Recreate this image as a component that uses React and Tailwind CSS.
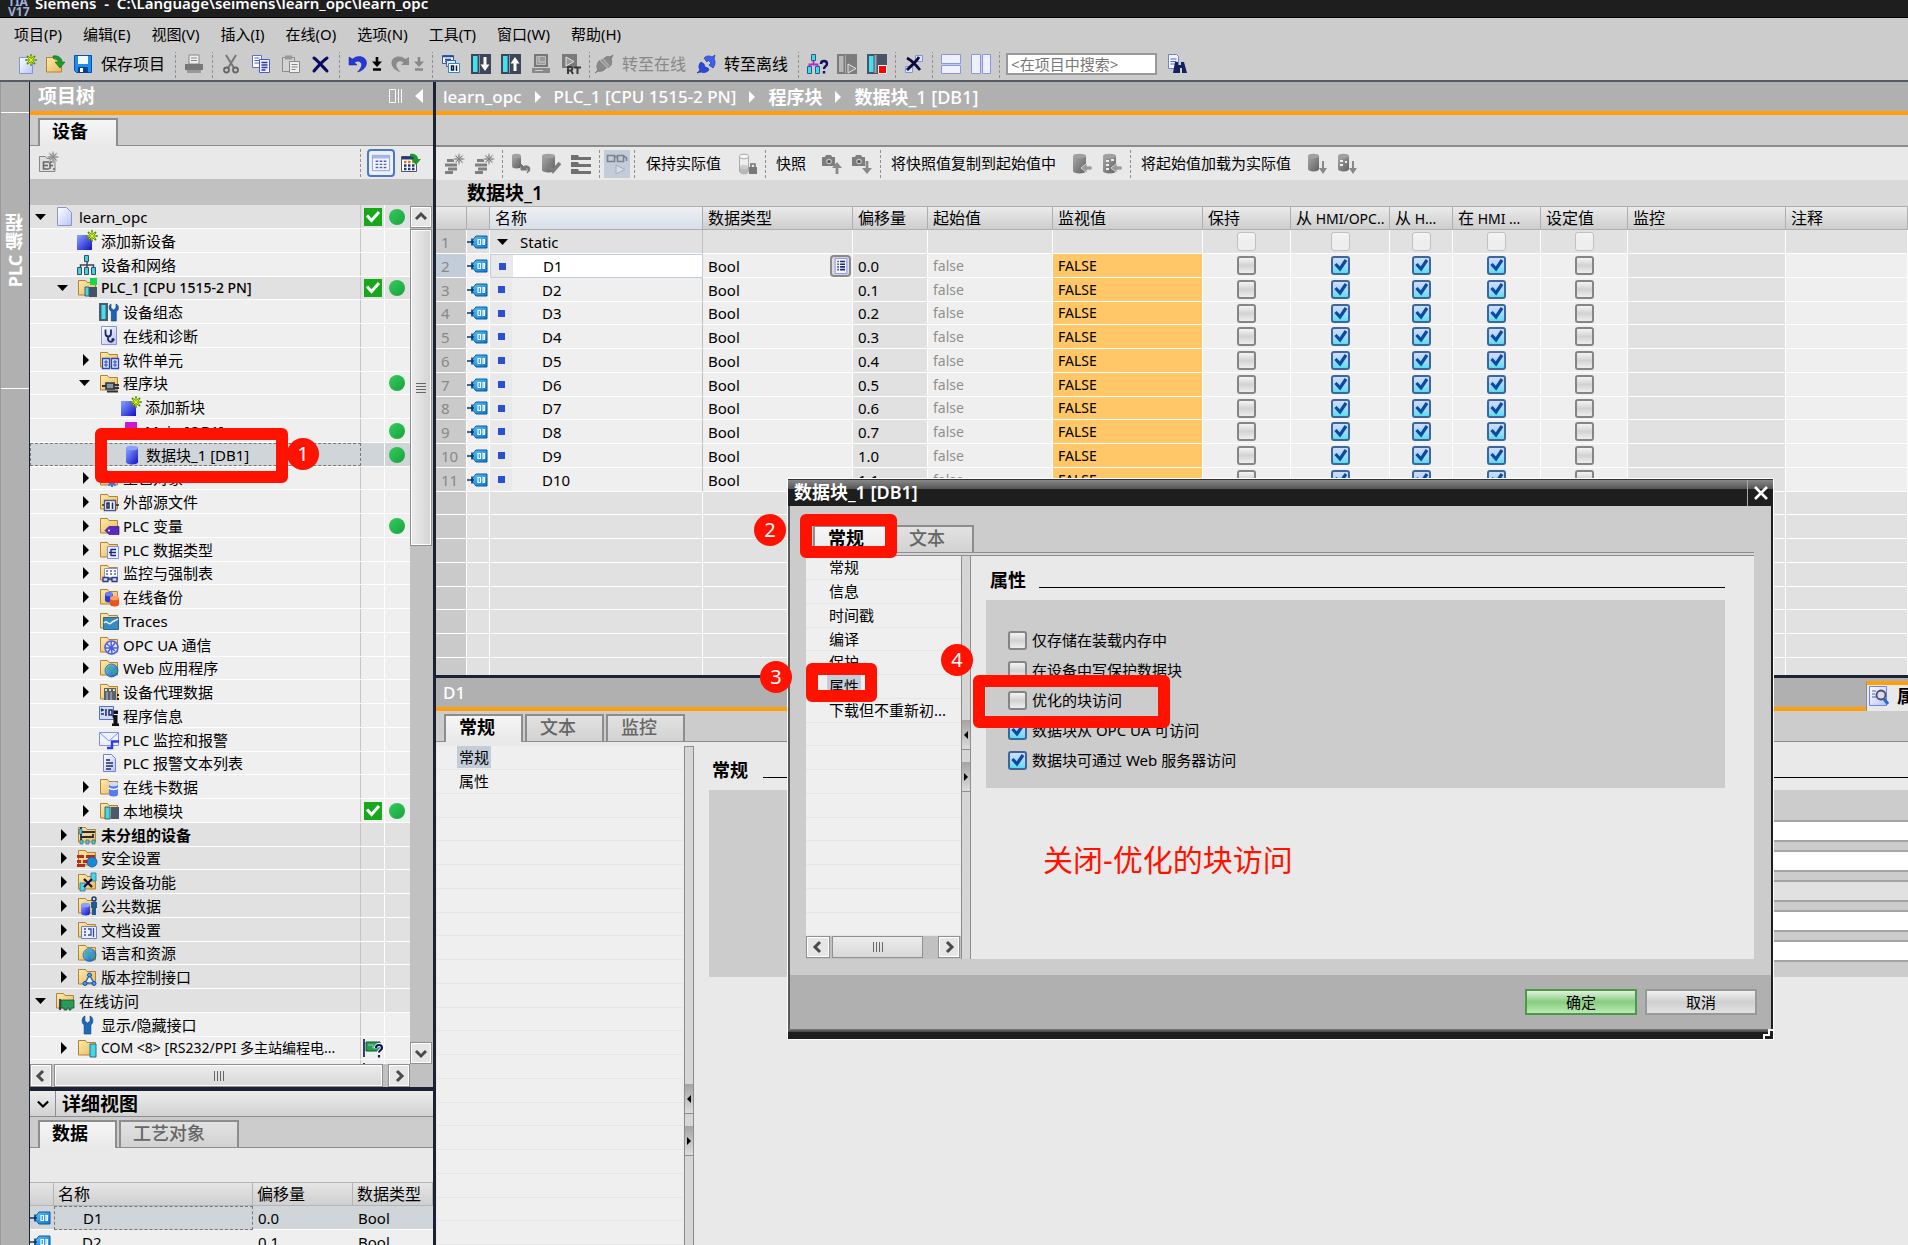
import React from "react";

/* ---------- shared gradients ---------- */
function Gradients() {
  const stops = {
    gFolder: ["#fdeaae", "#e9b95c"],
    gBlue: ["#8aa4ff", "#1010c8"],
    gGray: ["#a8a8a8", "#5f5f5f"],
    gTag: ["#5cc4ff", "#0a78cf"],
    gGreen: ["#45d06a", "#119a38"],
    gPage: ["#ffffff", "#b9c4f5"],
    gGlobe: ["#7fd6ff", "#0a55b5"],
  };
  return (
    <svg width="0" height="0" className="absolute" aria-hidden="true">
      <defs>
        {Object.entries(stops).map(([id, [a, b]]) => (
          <linearGradient key={id} id={id} x1="0" y1="0" x2="1" y2="1">
            <stop offset="0" stopColor={a} />
            <stop offset="1" stopColor={b} />
          </linearGradient>
        ))}
      </defs>
    </svg>
  );
}

const folder = <path d="M1.5 17V2.500h7l1.500 2h8.500V17z" fill="url(#gFolder)" stroke="#b08432" />;
const spark = (x, y, c = "#f2f200", d = "#4a8a20") => (
  <g transform={`translate(${x} ${y})`} strokeLinecap="round">
    <path d="M0-5V5M-5 0H5M-3.500-3.500L3.500 3.500M3.500-3.500L-3.500 3.500" stroke={d} strokeWidth="1.800" />
    <path d="M0-4V4M-4 0H4M-2.500-2.500L2.500 2.500M2.500-2.500L-2.500 2.500" stroke={c} strokeWidth="1" />
  </g>
);
const cyl = (x, y, w, h, fill, top) => (
  <g>
    <path d={`M${x} ${y + 2}v${h - 4}a${w / 2} 2.500 0 0 0 ${w} 0v${4 - h}z`} fill={fill} />
    <ellipse cx={x + w / 2} cy={y + 2} rx={w / 2} ry="2.300" fill={top} />
  </g>
);
const pageShape = <path d="M4.500 1.500h8l4 4v13h-12z" fill="url(#gPage)" stroke="#6f83cf" />;
const globe = (x, y, r) => (
  <g>
    <circle cx={x} cy={y} r={r} fill="url(#gGlobe)" stroke="#0a4a9a" strokeWidth=".6" />
    <path d={`M${x - 4} ${y - 4}l4-1 1 3-3 3-3-2zM${x + 1} ${y}l4-2 1 3-3 4-2-2z`} fill="#3fae7a" opacity=".7" />
  </g>
);
const camera = (
  <g>
    <path d="M0 3h3l1-2h5l1 2h3v9H0z" fill="#7d7d7d" />
    <circle cx="7" cy="7.500" r="2.800" fill="#c4c4c4" />
    <circle cx="7" cy="7.500" r="1.600" fill="#505050" />
  </g>
);

const ICONS = {
  newProject: <>{<path d="M2.500 3.500h9l4 4v12h-13z" fill="url(#gPage)" stroke="#7f93df" />}{spark(14, 6)}</>,
  openProject: <><path d="M1.500 18V3.500h6l2 2h7V18z" fill="url(#gFolder)" stroke="#b08432" /><path d="M8 2c5-1 9 2 9 6h3l-5 6-5-6h3c0-2-2-4-5-4z" fill="#1d9a2d" stroke="#0b6a18" strokeWidth=".6" /></>,
  save: <><path d="M1.500 1.500h17v17h-15l-2-2z" fill="#1b8fe8" stroke="#0a4fae" /><path d="M5 2h10v8H5z" fill="#f4f8ff" /><path d="M5 13h10v6H5z" fill="#0a3f8e" /><path d="M7 14h3v4H7z" fill="#fff" /></>,
  print: <><path d="M5 1h10v9H5z" fill="#eee" stroke="#888" /><path d="M7 4h6M7 6.500h6" stroke="#888" /><path d="M1 10h18v6H1z" fill="#777" /><path d="M3 16h14v3H3z" fill="#999" /></>,
  cut: <><path d="M5 1l8 13M15 1L7 14" stroke="#777" strokeWidth="2" /><circle cx="5.500" cy="16" r="2.500" fill="none" stroke="#666" strokeWidth="1.800" /><circle cx="14.500" cy="16" r="2.500" fill="none" stroke="#666" strokeWidth="1.800" /></>,
  copy: <><path d="M1.500 1.500h9v12h-9z" fill="#fff" stroke="#6070c8" /><path d="M3.500 4h5M3.500 6.500h5M3.500 9h5" stroke="#5060b8" /><path d="M8.500 5.500h10v13h-10z" fill="#eef1ff" stroke="#4a5cc8" /><path d="M10.500 8.500h6M10.500 11h6M10.500 13.500h6M10.500 16h4" stroke="#2a3aa8" strokeWidth="1.300" /></>,
  paste: <><path d="M1.500 3.500h12v14h-12z" fill="#d2d2d2" stroke="#8a8a8a" /><path d="M4 1.500h7v4H4z" fill="#999" /><path d="M8.500 7.500h10v11h-10z" fill="#eee" stroke="#888" /><path d="M10.500 10.500h6M10.500 13h6M10.500 15.500h4" stroke="#888" /></>,
  del: <path d="M3 4c4 3 9 9 13 13M16 4C12 7 8 11 3 17" stroke="#0a0a60" strokeWidth="3" fill="none" strokeLinecap="round" />,
  undo: <path d="M1 3v8h8L6.500 8.500c4-3 8 0 7 3.500-.5 2-2 4-4 6 5-1 9-5 9-9 0-6-8-9-14-4z" fill="#2438d8" stroke="#1524a0" strokeWidth=".5" />,
  redo: <path d="M19 3v8h-8l2.500-2.500c-4-3-8 0-7 3.500.5 2 2 4 4 6-5-1-9-5-9-9 0-6 8-9 14-4z" fill="#8a8a8a" />,
  compile: <><path d="M1.500 1.500h11v8h-11z" fill="#eef2ff" stroke="#3a5aa8" /><path d="M1.500 2.500h11M4 5.500h6M4 7.500h6" stroke="#2a4a98" strokeWidth="1.500" /><path d="M5.500 6.500h9v6h-9z" fill="#dfe8f8" stroke="#3a5aa8" /><path d="M7.500 9.500h11v9h-11z" fill="#fff" stroke="#2a8ac8" /><path d="M10.500 12h2v4h-2zM15.500 11.500V17" fill="none" stroke="#0a1a50" strokeWidth="1.500" /></>,
  download: <><path d="M0 0h20v20H0z" fill="#3c4658" /><path d="M2 2h4.500v16H2z" fill="#43e0ee" /><path d="M8.500 1v18" stroke="#8a94a8" /><path d="M14 3v9" stroke="#fff" strokeWidth="3" /><path d="M9.500 10.500h9l-4.500 6.500z" fill="#fff" /></>,
  upload: <><path d="M0 0h20v20H0z" fill="#3c4658" /><path d="M2 2h4.500v16H2z" fill="#43e0ee" /><path d="M8.500 1v18" stroke="#8a94a8" /><path d="M14 17V8" stroke="#fff" strokeWidth="3" /><path d="M9.500 9.500h9L14 3z" fill="#fff" /></>,
  pc: <><path d="M3 0h14v13H3z" fill="#777" /><path d="M5.500 2.500h9v8h-9z" fill="#9a9a9a" stroke="#bbb" /><path d="M8 3v5h6" stroke="#ccc" fill="none" /><path d="M1 14h18v5H1z" fill="#888" /><path d="M4 16.500h8" stroke="#ccc" /></>,
  rt: <><path d="M1 0h15v14H1z" fill="#7a7a7a" /><path d="M5 3l8 4.500-8 4.500z" fill="#999" stroke="#e4e4e4" /><path d="M7 20v-7h2.500a1.800 1.800 0 0 1 0 3.600H7M10 16.600l2 3.400M13 13.500h7M16.500 13.500V20" fill="none" stroke="#3a3a3a" strokeWidth="2" /></>,
  plugGray: <><path d="M1 19l3-3c-2-3-1-6 1-9l3-1 4-3c2-1 4 0 4 0l3-2-2 4c1 3 1 6-2 8l-3 1-2 2c-3 2-5 1-6 1z" fill="#8a8a8a" stroke="#707070" strokeWidth=".8" /><path d="M6 6l8 8M9 5l6 7" stroke="#b4b4b4" strokeWidth="1.200" /></>,
  plugBlue: <><path d="M1 19l3-3c-2-3-1-6 1-8l3 2 1 3 3 1 1 2c-3 3-6 3-8 2z" fill="#2a48dc" stroke="#1524a0" strokeWidth=".6" /><path d="M19 1l-3 2c-3-2-6-1-8 1l3 4 1-2 3 3-2 2 4 3c2-3 3-6 1-9z" fill="#3c62f0" stroke="#1524a0" strokeWidth=".6" /></>,
  netHelp: <><path d="M4.500.500h4v6h-4z" fill="#45d8e8" stroke="#2a5a8a" /><path d="M6.500 7v3M2.500 14v-3.500h8V14" stroke="#b030c8" strokeWidth="2" fill="none" /><path d="M.500 12.500h4v7h-4zM8.500 12.500h4v7h-4z" fill="#45d8e8" stroke="#2a5a8a" /><path d="M14 10c0-4 6-4 6 0 0 2-3 2.500-3 5M17 17v2.500" stroke="#101060" strokeWidth="2.400" fill="none" /></>,
  simGray: <><path d="M0 0h20v20H0z" fill="#7c7c7c" /><path d="M2 2h4.500v16H2z" fill="#b8b8b8" /><path d="M8.500 1v18" stroke="#aaa" /><path d="M11 10l8 4.500-8 4.500z" fill="#8a8a8a" stroke="#e4e4e4" /></>,
  simStop: <><path d="M0 0h20v20H0z" fill="#4a5468" /><path d="M2 2h4.500v16H2z" fill="#43e0ee" /><path d="M8.500 1v18" stroke="#9aa4b8" strokeWidth="2" /><path d="M11.500 11.500h8v8h-8z" fill="#f00" stroke="#fff" /></>,
  cross: <><path d="M11.500 1.500h7v6h-7zM1.500 12.500h7v6h-7z" fill="#dfe6fb" stroke="#7f93df" /><path d="M3 4c4 2 9 7 13 12M15 3C12 8 8 11 3 16" stroke="#0a0a40" strokeWidth="2.800" fill="none" /></>,
  splitH: <><path d="M.500.500h19v9H.500zM.500 11.500h19v8H.500z" fill="#eef0ff" stroke="#8a96e0" /></>,
  splitV: <><path d="M.500.500h9v19h-9zM11.500.500h8v19h-8z" fill="#eef0ff" stroke="#8a96e0" /></>,
  find: <><path d="M1.500.500h8l2 2v12h-10z" fill="#f4f6ff" stroke="#6f83cf" /><path d="M3.500 5h6M3.500 7.500h6M3.500 10h4" stroke="#5060b8" /><path d="M8 8h3v3h3V8h3l3 11h-5v-5h-2v5H6z" fill="#16205e" /></>,
  addGray: <><path d="M1.500 3.500h6l1.500 2h8v13h-15.500z" fill="#ddd" stroke="#888" /><path d="M5 9h6M5 12.500h5M5 16h6M5.500 9v7M12 9v7M12 9h4M12 12.500h3M15 16h2" stroke="#666" strokeWidth="1.600" />{spark(15, 4, "#888", "#bbb")}</>,
  gridView: <><path d="M.500 1.500h19v17H.500z" fill="#f4f6ff" stroke="#8a98e0" /><path d="M1 3.500h18" stroke="#a9b6f0" strokeWidth="3" /><path d="M4 8h3M8.500 8h3M13 8h3M4 11.500h3M8.500 11.500h3M13 11.500h3M4 15h3M8.500 15h3M13 15h3" stroke="#5060b8" strokeWidth="1.600" /></>,
  gridGo: <><path d="M.500 3.500h15v15H.500z" fill="#fff" stroke="#556" /><path d="M1 5h14" stroke="#223a78" strokeWidth="3" /><path d="M3 9h2.500M7 9h2.500M11 9h2.500" stroke="#e07a20" strokeWidth="2.400" /><path d="M3 12.500h2.500M7 12.500h2.500M11 12.500h2.500M3 16h2.500M7 16h2.500M11 16h2.500" stroke="#223a78" strokeWidth="2.400" /><path d="M9 1c5-1 8 2 8 5h3l-5 6-5-6h3c0-2-2-3-4-3z" fill="#1d9a2d" /></>,
  insRow: <><path d="M3 5h7v3H3zM1 9.500h12v3H1zM4 13.500h9v3H4zM1 17h8v3H1z" fill="#808080" />{spark(15, 5, "#808080", "#c4c4c4")}</>,
  cylUndo: <>{cyl(1, 0, 9, 14, "url(#gGray)", "#a0a0a0")}<path d="M10 10v6h6l-2-2c3-.5 4 2 2 5 4-2 4-8-2-7l-1.500.5z" fill="#777" stroke="#777" /></>,
  cylCheck: <>{cyl(1, 0, 13, 18, "url(#gGray)", "#a0a0a0")}<path d="M8 12l4 5 7-8" stroke="#7d7d7d" strokeWidth="3.500" fill="none" /></>,
  bars: <path d="M0 1h7l1 2h12v3H0zM0 8h7l1 2h12v3H0zM0 15h7l1 2h12v3H0z" fill="#707070" />,
  glasses: <><path d="M.500 1.500h7v6h-7zM10.500 1.500h6v6h-6zM7.500 3h3M16.500 2l3 2v3" fill="none" stroke="#7a828c" strokeWidth="1.600" /><path d="M9 11l9 4.500L9 20z" fill="#d8dde2" stroke="#a4aeb8" /></>,
  cylLock: <><path d="M2.500 3v14c0 3 9 3 9 0V3" fill="#eee" stroke="#aaa" />{cyl(3, 11, 8, 9, "#b8b8b8", "#ccc")}<ellipse cx="7" cy="2.500" rx="4.500" ry="2.300" fill="#f4f4f4" stroke="#aaa" /><path d="M12 13h8v7h-8z" fill="#777" /><path d="M14 13v-3h4v3" fill="none" stroke="#777" strokeWidth="1.600" /></>,
  camUp: <>{camera}<path d="M15 20v-8" stroke="#8a8a8a" strokeWidth="2.800" /><path d="M10 14h10l-5-6z" fill="#8a8a8a" /></>,
  camDown: <>{camera}<path d="M15 7v8" stroke="#8a8a8a" strokeWidth="2.800" /><path d="M10 14h10l-5 6z" fill="#8a8a8a" /></>,
  cylLeft: <>{cyl(1, 0, 13, 19, "url(#gGray)", "#a0a0a0")}<path d="M9 14l6-5v3h5v4h-5v3z" fill="#9a9a9a" stroke="#e4e4e4" strokeWidth=".8" /></>,
  cylLeftDots: <>{cyl(1, 0, 13, 19, "url(#gGray)", "#a0a0a0")}<path d="M4 7h3M4 11h3M4 15h3M9 6h3" stroke="#eee" strokeWidth="2" /><path d="M9 14l6-5v3h5v4h-5v3z" fill="#9a9a9a" stroke="#e4e4e4" strokeWidth=".8" /></>,
  cylDown: <>{cyl(1, 0, 11, 17, "url(#gGray)", "#a0a0a0")}<path d="M16 7v9" stroke="#888" strokeWidth="2" /><path d="M12 14h8l-4 6z" fill="#888" /></>,
  cylDownDots: <>{cyl(1, 0, 11, 17, "url(#gGray)", "#a0a0a0")}<path d="M3 7h3M3 11h3M8 8h2" stroke="#eee" strokeWidth="2" /><path d="M16 7v9" stroke="#888" strokeWidth="2" /><path d="M12 14h8l-4 6z" fill="#888" /></>,
  project: <path d="M2.500.500h9l5 5v13h-14z" fill="url(#gPage)" stroke="#8a96d0" />,
  add: <><path d="M0 4h15v15H0z" fill="url(#gBlue)" />{spark(15, 5)}</>,
  network: <><path d="M10 7v3M3.500 14v-4h13v4M10 10v4" stroke="#445" strokeWidth="1.500" fill="none" /><path d="M7.500.500h4v6h-4zM.500 12.500h4v7h-4zM7.500 12.500h4v7h-4zM14.500 12.500h4v7h-4z" fill="#43d0e0" stroke="#33506a" /></>,
  plc: <>{folder}<path d="M8 9h4v9H8z" fill="#43d8e8" stroke="#345" strokeWidth=".8" /><path d="M12 9h8v10h-8z" fill="#445064" /><path d="M13 0h7v7h-7z" fill="#12d84a" /></>,
  devConfig: <><path d="M0 1h9v18H0z" fill="#4a5c70" /><path d="M2.500 3h4v14h-4z" fill="#43e0ee" /><path d="M12 2v4l2.500 2L17 6V2c3 1 3.500 6 .3 7.500V19h-5V9.500C9.500 8 9.500 3 12 2z" fill="#1d62b8" stroke="#0c3a78" strokeWidth=".6" /></>,
  diag: <><path d="M2.500.500h15v18h-15z" fill="url(#gPage)" stroke="#8a96d0" /><path d="M6.500 3.500v4c0 4 5.500 4 5.500 0v-4M9 11v2c0 3 4 3.500 5 1.500" fill="none" stroke="#1a2a6a" strokeWidth="1.800" /><circle cx="14" cy="13.500" r="1.600" fill="#1a2a6a" /></>,
  units: <>{folder}<path d="M3.500 8.500h7v10h-7zM12.500 8.500h7v10h-7z" fill="#dfe8ff" stroke="#2a48b8" strokeWidth="1.300" /><path d="M5 12h4M5 15h4M14 12h4M14 15h4M7 10v7M16 10v7" stroke="#2a48b8" /></>,
  blocks: <>{folder}<path d="M7 10h8v6H7z" fill="#8a94a4" stroke="#2a3442" strokeWidth="1.600" /><path d="M3 13h4M15 12h5M15 15h5M8 18.500h11" stroke="#2a3442" strokeWidth="2" /></>,
  ob: <path d="M4 1h12v17H4z" fill="#c81ad0" />,
  db: cyl(4, 1, 12, 18, "url(#gBlue)", "#8aa0ff"),
  tech: <>{folder}<path d="M13 9v10M8 14h10M9.500 10.500l7 7M16.500 10.500l-7 7" stroke="#2a7ae0" strokeWidth="2" /><circle cx="13" cy="14" r="3" fill="#2a7ae0" /></>,
  extSrc: <>{folder}<path d="M5.500 8.500h11v10h-11z" fill="#fff" stroke="#4a5a80" strokeWidth="1.400" /><path d="M8 11h2v5H8zM13.500 10.500V17M3 13h2M17 13h3" fill="none" stroke="#1a2a5a" strokeWidth="1.600" /></>,
  tags: <>{folder}<path d="M6 14.500l4-4h10v8H10z" fill="#5a2ac0" stroke="#3a1480" strokeWidth=".7" /><circle cx="10" cy="14.500" r="1" fill="#fff" /></>,
  types: <>{folder}<path d="M8.500 6.500h11v12h-11z" fill="#e8edff" stroke="#7f93df" /><path d="M12 9v7M12 9.500h5M12 12.500h5M12 15.500h5M10 12.500h2" stroke="#1a2a7a" strokeWidth="1.400" /></>,
  watch: <>{folder}<path d="M5.500 5.500h13v9h-13z" fill="#fff" stroke="#8a96d0" /><path d="M7 8h2M11 8h2M15 8h2M7 11h2M11 11h2M15 11h2" stroke="#5060b8" strokeWidth="1.400" /><path d="M4 14.500h5v4H4zM13 14.500h5v4h-5zM9 16h4" fill="#cfd8f8" stroke="#2a3a8a" strokeWidth="1.300" /></>,
  backup: <>{folder}{cyl(6, 5, 8, 10, "#2a3ad8", "#6a80f0")}{cyl(11, 9, 9, 10, "#e8541a", "#ff9a6a")}</>,
  traces: <>{folder}<path d="M4.500 6.500h15v12h-15z" fill="#3a8ac0" stroke="#2a6a98" /><path d="M5 12c3-4 4 3 7 0s4-2 7-4" stroke="#e8f4ff" strokeWidth="1.500" fill="none" /></>,
  opcua: <>{folder}<circle cx="12.500" cy="12.500" r="6.500" fill="#e4e8ff" stroke="#4a5ce0" strokeWidth="1.500" /><path d="M8 9l8 7M16 8l-7 9M6 13h13M12 6l1 13" stroke="#4a5ce0" strokeWidth="1.500" /></>,
  web: <>{folder}{globe(12.5, 12.5, 6.5)}</>,
  proxy: <>{folder}<path d="M5 6h12v12H5z" fill="#5a6270" /><path d="M6 8h2M10 8h2M14 8h2" stroke="#f0e0a0" strokeWidth="2" /><path d="M8 10v8M12 10v8" stroke="#9aa4b4" strokeWidth="1.500" /><path d="M18 13h2M18 17h2" stroke="#222" strokeWidth="2" /></>,
  info: <><path d="M.500.500h14v13h-14z" fill="#cfdcf8" stroke="#5a70b8" /><path d="M2 3l2 1-2 1M2 8h3M7 3v7M10 4h3v5h-3z" stroke="#1a2a6a" strokeWidth="1.500" fill="none" /><path d="M13.500 9h5v8.500h1.500v2.500h-7v-2.500h1.500v-6h-1zM14.500 4.500h4.500v3.500h-4.500z" fill="#111" /></>,
  alarm: <><path d="M.500 2.500h19v13H.500z" fill="#eef2ff" stroke="#7f93df" /><path d="M1 3l9 8 9-8" fill="none" stroke="#7f93df" /><path d="M8 18h5v-6.500h7" fill="none" stroke="#2a3af0" strokeWidth="2.400" /></>,
  textList: <>{pageShape}<path d="M7 7h4M7 10h7M7 13h7M7 16h5" stroke="#1a2a6a" strokeWidth="1.500" /></>,
  card: <>{folder}{cyl(10, 5, 9, 14, "#5a78f0", "#cfdcff")}<path d="M10 11c2 2 7 2 9 0" stroke="#fff" strokeWidth="1.500" fill="none" /></>,
  local: <>{folder}<path d="M6 6h5v12H6z" fill="#43d8e8" stroke="#345" strokeWidth=".8" /><path d="M12 6h8v12h-8z" fill="#4c586c" /></>,
  ungrouped: <>{folder}<path d="M2 7h16M4 2v14M4 12h12v-3" stroke="#203040" strokeWidth="1.800" fill="none" /><path d="M3 15h3v4H3zM9 15h3v4H9zM15 15h3v4h-3zM2 4h3v5H2z" fill="#43d0e0" stroke="#33506a" strokeWidth=".6" /></>,
  security: <>{folder}<path d="M0 7h7v3H0zM9 7h9v3H9zM0 12h4v3H0zM6 12h7v3H6zM0 16h8v3H0z" fill="#b82a1a" /><circle cx="15" cy="14" r="5" fill="#1888d8" stroke="#0a4f98" strokeWidth=".7" /></>,
  crossDev: <>{folder}<path d="M14 1h5v8h-5zM3 11h5v8H3z" fill="#43d8e8" stroke="#33708a" strokeWidth=".8" /><path d="M7 7l8 8M15 7l-8 8" stroke="#101040" strokeWidth="2.200" /></>,
  common: <>{folder}{cyl(4, 7, 9, 12, "url(#gBlue)", "#8aa0ff")}<path d="M14 6h6v6h-1v7h-4v-7h-1z" fill="#1d5a98" /><circle cx="17" cy="3" r="2" fill="none" stroke="#1d3a68" strokeWidth="1.500" /></>,
  docs: <>{folder}<path d="M4.500 6.500h15v12h-15z" fill="#e8edff" stroke="#7080b8" /><path d="M7 9h2M7 12h2M7 15h2M11 9h3v6h-3M16.500 8v9" stroke="#3a4a98" strokeWidth="1.300" fill="none" /></>,
  lang: <>{folder}{globe(12.5, 12, 6.5)}</>,
  version: <>{folder}<path d="M12.500 8L8 16h9z" stroke="#2a6ac8" strokeWidth="1.500" fill="#e8f2ff" /><circle cx="12.500" cy="8" r="2" fill="#4a9af0" stroke="#1a4a98" /><circle cx="8" cy="16.500" r="2" fill="#4a9af0" stroke="#1a4a98" /><circle cx="17" cy="16.500" r="2" fill="#4a9af0" stroke="#1a4a98" /></>,
  online: <>{folder}<path d="M5 8v11" stroke="#101040" strokeWidth="1.500" /><path d="M6 9h13v8h-3v2h-2v-2h-2v2H9v-2H6z" fill="#2a9a5a" stroke="#0a5a2a" strokeWidth=".8" /></>,
  wrench: <path d="M7 1v5l3 2 3-2V1c4 1 4.500 7 1 9v9H6v-9C2.500 8 3 2 7 1z" transform="translate(2 0) scale(.85 1)" fill="#1d6ab8" stroke="#0c3a78" strokeWidth=".6" />,
  com: <>{folder}<path d="M13 6h6v13h-6z" fill="#43d8e8" stroke="#2a6a8a" /></>,
  nicHelp: <><path d="M1 1v18" stroke="#101040" strokeWidth="1.600" /><path d="M3 4h14v9H3z" fill="#2a9a5a" stroke="#0a5a2a" /><path d="M5 7h5v3h4" stroke="#8ad8a0" fill="none" /><path d="M13 10c0-4 6-4 6 0 0 2-3 2.500-3 4.500M16 17v2.500" stroke="#fff" strokeWidth="4" fill="none" /><path d="M13 10c0-4 6-4 6 0 0 2-3 2.500-3 4.500M16 17v2.500" stroke="#101060" strokeWidth="2.200" fill="none" /></>,
  props: <><path d="M.500.500h17v19H.500z" fill="url(#gPage)" stroke="#6f83ef" /><path d="M3 5h4M3 8h3M3 11h4" stroke="#5060b8" /><path d="M15 13l4 5" stroke="#2a6ac8" strokeWidth="3" /><circle cx="12" cy="9" r="4.500" fill="#d8dcf0" stroke="#4a4a6a" strokeWidth="1.800" /></>,
  list: <><path d="M3.500 1.500h13v17h-13z" fill="#f4f6ff" stroke="#7f83ef" /><path d="M6 5h1.500M6 8h1.500M6 11h1.500M6 14h1.500M9 5h5.500M9 8h5.500M9 11h5.500M9 14h5.500" stroke="#1a2a6a" strokeWidth="1.800" /></>,
  tag: <><path d="M4 10l5-6h11v12H9z" fill="url(#gTag)" stroke="#0a5aa0" /><path d="M0 10h7M5 6.500v7" stroke="#0a3a70" strokeWidth="1.600" /><path d="M11 7.500h2.500v5H11zM16 7.500h1.500v5H16z" fill="#2a9ae8" stroke="#fff" strokeWidth="1.200" /></>,
};

function Icon({ name, className = "size-5" }) {
  return (
    <svg viewBox="0 0 20 20" fill="none" className={`shrink-0 overflow-visible ${className}`} aria-hidden="true">
      {ICONS[name]}
    </svg>
  );
}

function IconButton({ name, label }) {
  return (
    <button type="button" aria-label={label || name} className="shrink-0">
      <Icon name={name} />
    </button>
  );
}

const Sep = ({ className = "mx-2" }) => (
  <span className={`h-7 shrink-0 border-l border-dashed border-[#8f8f8f] ${className}`} />
);

function Chevron({ dir }) {
  const d = { up: "M2 9l5-5 5 5", down: "M2 5l5 5 5-5", left: "M9 2L4 7l5 5", right: "M5 2l5 5-5 5" }[dir];
  return (
    <svg viewBox="0 0 14 14" className="size-[14px]" fill="none" aria-hidden="true">
      <path d={d} stroke="#4a4a4a" strokeWidth="3" />
    </svg>
  );
}

const scrollBtn = "grid shrink-0 place-items-center border border-[#909090] bg-[#e6e6e6] outline outline-1 -outline-offset-2 outline-white";

function HGrip() {
  return (
    <span className="flex gap-[2px]">
      {[0, 1, 2, 3].map((i) => (
        <span key={i} className="h-[10px] w-px bg-[#666]" />
      ))}
    </span>
  );
}

function Triangle({ open, className = "" }) {
  return (
    <svg viewBox="0 0 12 12" className={`size-3 ${className}`} aria-hidden="true">
      <path d={open ? "M0 3h11L5.500 9z" : "M4 0l6 6-6 6z"} fill="currentColor" />
    </svg>
  );
}

function Tab({ active, children, className = "" }) {
  return (
    <button
      type="button"
      className={`border-2 border-b-0 border-[#8d8d8d] pb-1 text-left text-lg leading-[22px] ${
        active
          ? "-mb-px bg-gradient-to-b from-[#f6f6f6] to-[#e9e9e9] font-bold text-black"
          : "bg-gradient-to-b from-[#e2e2e2] to-[#d2d2d2] font-medium text-[#666]"
      } ${className}`}
    >
      {children}
    </button>
  );
}

function Check({ checked, faint, label, id }) {
  return (
    <span className="inline-grid size-[19px] shrink-0 align-middle">
      <input
        id={id}
        type="checkbox"
        aria-label={label}
        defaultChecked={checked}
        disabled={faint}
        className="peer col-start-1 row-start-1 size-[19px] appearance-none rounded-[3px] border-2 border-[#858585] bg-gradient-to-b from-[#f4f4f4] via-[#d2d2d2] to-[#eeeeee] checked:border-[#3f6699] checked:from-[#cfdcff] checked:via-[#a8d8f8] checked:to-[#4fe0f0] disabled:border disabled:border-[#c0c0c0] disabled:via-[#eeeeee]"
      />
      <svg viewBox="0 0 19 19" className="pointer-events-none col-start-1 row-start-1 hidden size-[19px] peer-checked:block" aria-hidden="true">
        <path d="M4.500 8l4.500 5 6-9" fill="none" stroke="#0b4aa0" strokeWidth="3.200" />
      </svg>
    </span>
  );
}

/* Row pitch averages 23.75 px: three 24 px rows, then a 23 px one. */
const rowH = (i) => (i % 4 === 3 ? "h-[23px]" : "h-6");

/* ---------- title, menu and main toolbar ---------- */
function TopBars() {
  const menus = ["项目(P)", "编辑(E)", "视图(V)", "插入(I)", "在线(O)", "选项(N)", "工具(T)", "窗口(W)", "帮助(H)"];
  return (
    <header className="shrink-0">
      <div className="flex h-[18px] items-end overflow-hidden border-b border-black bg-[#1e1e1e] pl-2 text-white">
        <span className="w-[27px] text-xs leading-[10px] font-bold text-[#9fb0de]">TIA<br />V17</span>
        <span className="pb-[3px] text-[15px] leading-[22px] font-semibold whitespace-nowrap">Siemens&nbsp; -&nbsp; C:\Language\seimens\learn_opc\learn_opc</span>
      </div>
      <nav className="flex h-[34px] items-center gap-[21px] bg-[#cccccc] pb-px pl-[14px] text-[15px]">
        {menus.map((m) => (
          <button type="button" key={m} className="whitespace-nowrap">{m}</button>
        ))}
      </nav>
      <div className="flex h-[30px] items-center overflow-hidden border-b-2 border-[#565c66] bg-[#cccccc] pb-1 pl-[17px]">
        <div className="flex items-center gap-2">
          <IconButton name="newProject" label="新建项目" />
          <IconButton name="openProject" label="打开项目" />
          <button type="button" className="flex items-center gap-2 text-base whitespace-nowrap"><Icon name="save" />保存项目</button>
        </div>
        <Sep className="mr-2 ml-[10px]" />
        <IconButton name="print" label="打印" />
        <Sep />
        <div className="flex gap-[10px]">
          <IconButton name="cut" label="剪切" />
          <IconButton name="copy" label="复制" />
          <IconButton name="paste" label="粘贴" />
          <IconButton name="del" label="删除" />
        </div>
        <Sep />
        <div className="flex items-center gap-1">
          <IconButton name="undo" label="撤销" />
          <DropArrow className="text-black" />
          <span className="w-0" />
          <IconButton name="redo" label="重做" />
          <DropArrow className="text-[#888]" />
        </div>
        <Sep />
        <div className="flex gap-[10px]">
          <IconButton name="compile" label="编译" />
          <IconButton name="download" label="下载" />
          <IconButton name="upload" label="上传" />
          <IconButton name="pc" label="仿真" />
          <IconButton name="rt" label="运行系统" />
        </div>
        <Sep className="mr-1 ml-2" />
        <div className="flex items-center gap-[10px] text-base whitespace-nowrap">
          <button type="button" className="flex items-center gap-2 text-[#888]"><Icon name="plugGray" />转至在线</button>
          <button type="button" className="flex items-center gap-2"><Icon name="plugBlue" />转至离线</button>
        </div>
        <Sep className="mr-2 ml-[10px]" />
        <div className="flex gap-[10px]">
          <IconButton name="netHelp" label="可访问的设备" />
          <IconButton name="simGray" label="启动 CPU" />
          <IconButton name="simStop" label="停止 CPU" />
        </div>
        <Sep />
        <IconButton name="cross" label="交叉引用" />
        <Sep />
        <div className="flex gap-[10px]">
          <IconButton name="splitH" label="水平拆分" />
          <IconButton name="splitV" label="垂直拆分" />
        </div>
        <Sep className="mr-[6px] ml-2" />
        <input
          aria-label="在项目中搜索"
          placeholder="<在项目中搜索>"
          className="h-[22px] w-[151px] border-2 border-[#999] bg-white pl-[3px] text-[15px] leading-[18px] placeholder:text-[#777]"
        />
        <span className="ml-[10px] flex"><IconButton name="find" label="搜索" /></span>
      </div>
    </header>
  );
}

function DropArrow({ className }) {
  return (
    <svg viewBox="0 0 10 14" className={`h-[14px] w-[10px] ${className}`} aria-hidden="true">
      <path d="M5 0v5M1 12.500h8" stroke="currentColor" strokeWidth="2.600" />
      <path d="M0 4.500h10L5 10z" fill="currentColor" />
    </svg>
  );
}

/* ---------- project tree ---------- */
// [level, expander, icon, label, shaded, status box, status dot]
const TREE = [
  [0, "o", "project", "learn_opc", 1, 1, 1],
  [1, "", "add", "添加新设备"],
  [1, "", "network", "设备和网络"],
  [1, "o", "plc", "PLC_1 [CPU 1515-2 PN]", 1, 1, 1],
  [2, "", "devConfig", "设备组态"],
  [2, "", "diag", "在线和诊断"],
  [2, "c", "units", "软件单元"],
  [2, "o", "blocks", "程序块", 0, 0, 1],
  [3, "", "add", "添加新块"],
  [3, "", "ob", "Main [OB1]", 0, 0, 1],
  [3, "", "db", "数据块_1 [DB1]", 0, 0, 1],
  [2, "c", "tech", "工艺对象"],
  [2, "c", "extSrc", "外部源文件"],
  [2, "c", "tags", "PLC 变量", 0, 0, 1],
  [2, "c", "types", "PLC 数据类型"],
  [2, "c", "watch", "监控与强制表"],
  [2, "c", "backup", "在线备份"],
  [2, "c", "traces", "Traces"],
  [2, "c", "opcua", "OPC UA 通信"],
  [2, "c", "web", "Web 应用程序"],
  [2, "c", "proxy", "设备代理数据"],
  [2, "", "info", "程序信息"],
  [2, "", "alarm", "PLC 监控和报警"],
  [2, "", "textList", "PLC 报警文本列表"],
  [2, "c", "card", "在线卡数据"],
  [2, "c", "local", "本地模块", 0, 1, 1],
  [1, "c", "ungrouped", "未分组的设备", 1],
  [1, "c", "security", "安全设置", 1],
  [1, "c", "crossDev", "跨设备功能", 1],
  [1, "c", "common", "公共数据", 1],
  [1, "c", "docs", "文档设置", 1],
  [1, "c", "lang", "语言和资源", 1],
  [1, "c", "version", "版本控制接口", 1],
  [0, "o", "online", "在线访问", 1],
  [1, "", "wrench", "显示/隐藏接口"],
  [1, "c", "com", "COM <8> [RS232/PPI 多主站编程电...", 0, 2],
  [1, "c", "com", "", 0, 2],
];
const INDENT = ["pl-1", "pl-[26px]", "pl-12", "pl-[70px]"];

function TreeRow({ row, i }) {
  const [level, exp, icon, label, shaded, box, dot] = row;
  const selected = icon === "db";
  const weight = icon === "ungrouped" ? "font-bold" : icon === "plc" ? "font-medium" : "";
  const size = label.length > 20 ? "text-sm" : "text-[15px]";
  return (
    <li className={`flex shrink-0 border-b border-white ${rowH(i)} ${selected ? "bg-[#d0d5da]" : shaded ? "bg-[#e1e1e1]" : "bg-[#efefef]"}`}>
      <div className={`flex min-w-0 flex-1 items-center overflow-hidden border-r ${selected ? "border border-dashed border-[#777]" : "border-[#c4c4c4]"} ${INDENT[level]}`}>
        <span className="flex w-[14px] shrink-0 justify-center">
          {exp && <button type="button" aria-label={label || "展开"}><Triangle open={exp === "o"} /></button>}
        </span>
        <span className="mr-1 ml-[7px] flex"><Icon name={icon} /></span>
        <span className={`leading-[22px] whitespace-nowrap ${size} ${weight}`}>{label}</span>
      </div>
      <div className="flex w-6 shrink-0 items-center justify-center border-r border-white">
        {box === 1 && (
          <svg viewBox="0 0 18 18" className="size-[18px]" aria-hidden="true">
            <path d="M0 0h18v18H0z" fill="#18a81c" />
            <path d="M3 7.500l4.500 5L15 4" fill="none" stroke="#fff" strokeWidth="3" />
          </svg>
        )}
        {box === 2 && <Icon name="nicHelp" />}
      </div>
      <div className="flex w-[25px] shrink-0 items-center justify-center pr-[2px]">
        {dot && <span className="size-4 rounded-full bg-gradient-to-br from-[#34cc5c] to-[#17a23e]" />}
      </div>
    </li>
  );
}

function ProjectTree() {
  return (
    <aside className="flex w-[403px] shrink-0 flex-col">
      <div className="flex h-[29px] shrink-0 items-center bg-[#b0b0b0] pr-[10px] pb-[2px] pl-2 text-white">
        <h2 className="flex-1 text-[19px] leading-6 font-bold">项目树</h2>
        <svg viewBox="0 0 14 14" className="mr-3 size-[14px]" fill="none" aria-hidden="true">
          <path d="M.5.500h6v13h-6zM9.500 0v14M12.500 0v14" stroke="#fff" />
        </svg>
        <svg viewBox="0 0 8 14" className="h-[14px] w-2" aria-hidden="true"><path d="M8 0v14L0 7z" fill="#fff" /></svg>
      </div>
      <div className="h-1 shrink-0 bg-[#ff9f0a]" />
      <div className="flex h-[31px] shrink-0 items-end border-b border-[#8d8d8d] bg-[#cccccc] pl-2">
        <Tab active className="h-[28px] w-[80px] pl-3">设备</Tab>
      </div>
      <div className="flex h-[33px] shrink-0 items-center bg-[#e9e9e9] pl-2">
        <span className="flex flex-1"><IconButton name="addGray" label="新建组" /></span>
        <Sep className="mr-[6px]" />
        <button type="button" aria-label="列表视图" className="mr-[6px] grid h-7 w-7 place-items-center rounded-sm border-2 border-[#4a78c8] bg-[#eef1fb]"><Icon name="gridView" className="size-[18px]" /></button>
        <span className="mr-3 flex"><IconButton name="gridGo" label="转到概览" /></span>
      </div>
      <div className="h-[26px] shrink-0 bg-[#c1c1c1]" />
      <div className="flex min-h-0 flex-1">
        <ul className="flex min-w-0 flex-1 flex-col overflow-hidden">
          {TREE.map((r, i) => <TreeRow key={i} row={r} i={i} />)}
        </ul>
        <div className="flex w-[23px] shrink-0 flex-col bg-[#c1c1c1] pr-px">
          <button type="button" aria-label="向上滚动" className={`mt-px h-[22px] ${scrollBtn}`}><Chevron dir="up" /></button>
          <div className="mt-px grid h-[317px] place-items-center border border-[#909090] bg-gradient-to-r from-[#ececec] to-[#d4d4d4] outline outline-1 -outline-offset-2 outline-white">
            <span className="flex flex-col gap-[2px]">
              {[0, 1, 2, 3].map((k) => <span key={k} className="h-px w-[10px] bg-[#666]" />)}
            </span>
          </div>
          <span className="flex-1" />
          <button type="button" aria-label="向下滚动" className={`h-[22px] ${scrollBtn}`}><Chevron dir="down" /></button>
        </div>
      </div>
      <div className="flex h-[23px] shrink-0 bg-[#c1c1c1] pr-[23px]">
        <button type="button" aria-label="向左滚动" className={`w-[22px] ${scrollBtn}`}><Chevron dir="left" /></button>
        <div className="mx-[2px] grid flex-1 place-items-center border border-[#909090] bg-gradient-to-b from-[#ececec] to-[#d8d8d8] outline outline-1 -outline-offset-2 outline-white"><HGrip /></div>
        <button type="button" aria-label="向右滚动" className={`ml-[3px] w-[22px] ${scrollBtn}`}><Chevron dir="right" /></button>
      </div>
      <DetailView />
    </aside>
  );
}

function DetailView() {
  const rows = [["D1", "0.0", "Bool"], ["D2", "0.1", "Bool"]];
  return (
    <section className="flex h-[158px] shrink-0 flex-col overflow-hidden border-t-4 border-[#1c2236] bg-[#e9e9e9]">
      <div className="flex h-[26px] shrink-0 items-center border-b border-[#8d8d8d] bg-gradient-to-b from-[#ececec] to-[#d2d2d2]">
        <button type="button" aria-label="折叠" className="grid h-full w-[26px] place-items-center border-r border-[#8d8d8d]">
          <svg viewBox="0 0 14 14" className="size-3" fill="none" aria-hidden="true"><path d="M1 4l6 6 6-6" stroke="#000" strokeWidth="2.500" /></svg>
        </button>
        <h2 className="pl-[6px] text-[19px] leading-6 font-bold">详细视图</h2>
      </div>
      <div className="flex h-[31px] shrink-0 items-end gap-[2px] border-b border-[#8d8d8d] bg-[#cccccc] pl-2">
        <Tab active className="h-7 w-[79px] pl-3">数据</Tab>
        <Tab className="h-[27px] w-[120px] pl-3">工艺对象</Tab>
      </div>
      <table className="mt-[34px] w-full table-fixed border-separate border-spacing-0">
        <colgroup><col className="w-6" /><col /><col className="w-[100px]" /><col className="w-[80px]" /></colgroup>
        <thead>
          <tr className="h-6 text-left text-base leading-[22px]">
            {["", "名称", "偏移量", "数据类型"].map((h) => (
              <th key={h} className="border-t border-r border-b border-[#b4b4b4] bg-gradient-to-b from-[#e6e6e6] to-[#cfcfcf] p-0 pl-1 font-normal whitespace-nowrap">{h}</th>
            ))}
          </tr>
        </thead>
        <tbody>
          {rows.map((r, i) => (
            <tr key={r[0]} className={`h-6 text-[15px] leading-[22px] ${i === 0 ? "bg-[#d0d5da]" : "bg-[#efefef]"}`}>
              <td className="border-b border-white p-0"><Icon name="tag" /></td>
              <td className={`p-0 pl-7 ${i === 0 ? "border border-dashed border-[#777]" : "border-b border-white"}`}>{r[0]}</td>
              <td className="border-b border-white p-0 pl-[5px]">{r[1]}</td>
              <td className="border-b border-white p-0 pl-[5px]">{r[2]}</td>
            </tr>
          ))}
        </tbody>
      </table>
    </section>
  );
}

/* ---------- data block editor ---------- */
const COLS = ["w-[31px]", "w-[23px]", "w-[213px]", "w-[150px]", "w-[75px]", "w-[125px]", "w-[150px]", "w-[88px]", "w-[99px]", "w-[63px]", "w-[88px]", "w-[87px]", "w-[158px]", ""];
const HEADS = ["", "", "名称", "数据类型", "偏移量", "起始值", "监视值", "保持", "从 HMI/OPC..", "从 H...", "在 HMI ...", "设定值", "监控", "注释"];
const OFFSETS = ["0.0", "0.1", "0.2", "0.3", "0.4", "0.5", "0.6", "0.7", "1.0", "1.1"];
const FLAGS = ["保持", "可访问", "可写", "可见", "设定值"];

function DbTable() {
  const cell = "border-b border-r border-white p-0";
  return (
    <table className="w-full table-fixed border-separate border-spacing-0 text-[15px] leading-[22px]">
      <colgroup>{COLS.map((c, i) => <col key={i} className={c} />)}</colgroup>
      <thead>
        <tr className="h-6 text-left text-base leading-5">
          {HEADS.map((h, i) => (
            <th key={i} className={`overflow-hidden border-t border-r border-b border-[#aeaeae] p-0 pl-[5px] font-normal whitespace-nowrap ${i === 2 ? "bg-gradient-to-b from-[#eef1f4] to-[#d8dfe8]" : "bg-gradient-to-b from-[#ebebeb] to-[#cdcdcd]"}`}>
              {h.includes("H") ? <>{h[0]}<span className="text-sm">{h.slice(1)}</span></> : h}
            </th>
          ))}
        </tr>
      </thead>
      <tbody>
        <tr className="h-6 bg-[#e1e1e1]">
          <td className={`${cell} bg-[#cacaca] pl-[5px] text-[#888]`}>1</td>
          <td className={cell}><Icon name="tag" /></td>
          <td className={`${cell} border-r-[#c0c0c0]`}>
            <span className="flex items-center"><button type="button" aria-label="折叠 Static" className="ml-[7px]"><Triangle open /></button><span className="ml-[11px]">Static</span></span>
          </td>
          {[3, 4, 5, 6].map((k) => <td key={k} className={cell} />)}
          {FLAGS.map((f) => <td key={f} className={`${cell} text-center leading-none`}><Check faint label={`Static ${f}`} /></td>)}
          <td className={cell} /><td className={cell} />
        </tr>
        {OFFSETS.map((off, i) => {
          const sel = i === 0;
          const name = `D${i + 1}`;
          return (
            <tr key={name} className={`bg-[#efefef] ${rowH(i + 1)}`}>
              <td className={`${cell} pl-[5px] text-[#888] ${sel ? "bg-[#c3cdd9]" : "bg-[#cacaca]"}`}>{i + 2}</td>
              <td className={cell}><Icon name="tag" /></td>
              <td className={`border-b p-0 ${sel ? "border border-[#c3cdd9] bg-white" : "border-r border-white border-r-[#c0c0c0]"}`}>
                <span className="flex items-center">
                  <span className="grid h-[22px] w-[22px] place-items-center bg-[#e9e9e9]"><span className="size-[7px] bg-[#2a4fd0]" /></span>
                  <span className="ml-[30px]">{name}</span>
                </span>
              </td>
              <td className={`${cell} pl-[5px]`}>
                <span className="flex items-center justify-between">
                  Bool
                  {sel && <button type="button" aria-label="选择数据类型" className="mr-px grid h-[22px] w-[21px] place-items-center rounded-sm border-2 border-[#8a8a8a] bg-[#dcdcdc]"><Icon name="list" className="size-[18px]" /></button>}
                </span>
              </td>
              <td className={`${cell} bg-[#e1e1e1] pl-[5px]`}>{off}</td>
              <td className={`${cell} pl-[5px] text-sm leading-[22px] text-[#8f8f8f]`}>false</td>
              <td className={`${cell} bg-[#ffc768] pl-[5px] text-sm leading-[22px]`}>FALSE</td>
              {FLAGS.map((f, k) => (
                <td key={f} className={`${cell} text-center leading-none`}><Check checked={k > 0 && k < 4} label={`${name} ${f}`} /></td>
              ))}
              <td className={`${cell} bg-[#e1e1e1]`} />
              <td className={cell} />
            </tr>
          );
        })}
        {Array.from({ length: 9 }, (_, i) => (
          <tr key={i} className={`bg-[#e1e1e1] ${rowH(i + 11)}`}>
            <td className={`${cell} bg-[#cacaca]`} />
            {Array.from({ length: 13 }, (_, k) => <td key={k} className={cell} />)}
          </tr>
        ))}
      </tbody>
    </table>
  );
}

function Crumbs() {
  const items = ["learn_opc", "PLC_1 [CPU 1515-2 PN]", "程序块", "数据块_1 [DB1]"];
  return (
    <div className="flex h-[29px] shrink-0 items-center bg-[#b0b0b0] pl-[7px] text-[17px] font-medium text-white">
      {items.map((t, i) => (
        <React.Fragment key={t}>
          {i > 0 && <svg viewBox="0 0 6 12" className="mx-[13px] h-3 w-[6px]" aria-hidden="true"><path d="M0 0l6 6-6 6z" fill="#fff" /></svg>}
          <a href="#" className={`whitespace-nowrap ${i > 1 ? "text-lg font-bold" : ""}`}>
            {i === 3 ? <>数据块<span className="font-medium">_1 [DB1]</span></> : t}
          </a>
        </React.Fragment>
      ))}
    </div>
  );
}

function Editor() {
  return (
    <section className="flex min-h-0 flex-1 flex-col overflow-hidden">
      <Crumbs />
      <div className="h-1 shrink-0 bg-[#ff9f0a]" />
      <div className="h-8 shrink-0 border-b-2 border-[#8d8d8d] bg-[#cccccc]" />
      <div className="flex h-[33px] shrink-0 items-center bg-[#e9e9e9] pl-2 text-[15px] whitespace-nowrap">
        <div className="flex gap-[10px]"><IconButton name="insRow" label="插入行" /><IconButton name="insRow" label="添加行" /></div>
        <Sep />
        <div className="flex gap-[10px]"><IconButton name="cylUndo" label="复位起始值" /><IconButton name="cylCheck" label="更新接口" /><IconButton name="bars" label="展开模式" /></div>
        <Sep className="mr-1 ml-2" />
        <button type="button" aria-label="全部监视" className="grid h-7 w-[26px] place-items-center bg-[#c3cdd9]"><Icon name="glasses" /></button>
        <Sep className="mr-[11px] ml-1" />
        <button type="button" className="flex items-center gap-4">保持实际值<Icon name="cylLock" /></button>
        <Sep className="mr-[10px] ml-2" />
        <div className="flex items-center gap-[10px]"><button type="button" className="flex items-center gap-4">快照<Icon name="camUp" /></button><IconButton name="camDown" label="下载快照" /></div>
        <Sep className="mr-[10px] ml-2" />
        <div className="flex items-center gap-[10px]"><button type="button" className="flex items-center gap-4">将快照值复制到起始值中<Icon name="cylLeft" /></button><IconButton name="cylLeftDots" label="复制设定值" /></div>
        <Sep className="mr-[10px] ml-2" />
        <div className="flex items-center gap-[10px]"><button type="button" className="flex items-center gap-4">将起始值加载为实际值<Icon name="cylDown" /></button><IconButton name="cylDownDots" label="加载设定值" /></div>
      </div>
      <h1 className="flex h-[26px] shrink-0 items-center bg-[#d9d9d9] pl-[31px] text-[19px] leading-6 font-bold">数据块<span className="font-semibold">_1</span></h1>
      <DbTable />
    </section>
  );
}

/* ---------- properties panes ---------- */
function Splitter({ className = "", handles }) {
  return (
    <div className={`flex shrink-0 flex-col border border-[#8d8d8d] bg-[#d6d6d6] ${className}`}>
      <span className={handles} />
      <button type="button" aria-label="折叠左侧" className="grid h-[30px] shrink-0 place-items-center border-b border-[#8d8d8d] bg-gradient-to-b from-[#a4a4a4] to-[#dcdcdc]">
        <svg viewBox="0 0 4 8" className="h-2 w-1" aria-hidden="true"><path d="M4 0v8L0 4z" /></svg>
      </button>
      <span className="h-3 shrink-0" />
      <button type="button" aria-label="展开左侧" className="grid h-[30px] shrink-0 place-items-center border-b border-[#8d8d8d] bg-gradient-to-b from-[#a4a4a4] to-[#dcdcdc]">
        <svg viewBox="0 0 4 8" className="h-2 w-1" aria-hidden="true"><path d="M0 0v8l4-4z" /></svg>
      </button>
    </div>
  );
}

function NavRows({ items, count, selected, indent }) {
  return (
    <ul className="flex min-h-0 flex-1 flex-col overflow-hidden bg-[#efefef]">
      {Array.from({ length: count }, (_, i) => (
        <li key={i} className={`shrink-0 border-b border-[#e6e6e6] text-[15px] leading-[22px] whitespace-nowrap ${rowH(i)} ${indent}`}>
          {items[i] && (
            <button type="button" className={`px-[2px] ${items[i] === selected ? "bg-[#c3cdd9]" : ""}`}>{items[i]}</button>
          )}
        </li>
      ))}
    </ul>
  );
}

function Inspector() {
  const fields = [["名称", "", "bg-white"], ["数据类型", "", "bg-white"], ["绝对地址", "", "bg-[#e1e1e1]"], ["默认值", "", "bg-white"], ["起始值", "", "bg-white"]];
  return (
    <section className="flex h-[570px] shrink-0 flex-col overflow-hidden border-t-[3px] border-[#1c2236] bg-[#e9e9e9]">
      <div className="flex h-[33px] shrink-0 bg-[#b0b0b0]">
        <h2 className="flex flex-1 items-center border-b-4 border-[#ff9f0a] pl-[7px] text-[17px] font-medium text-white">D1</h2>
        <button type="button" className="mt-[3px] flex w-[42px] items-center gap-2 overflow-hidden border-t-4 border-l border-[#ff9f0a] border-l-[#8d8d8d] bg-[#e9e9e9] pb-1 pl-[2px] text-lg font-bold whitespace-nowrap">
          <Icon name="props" />属性
        </button>
      </div>
      <div className="flex h-[31px] shrink-0 items-end gap-[2px] border-b border-[#8d8d8d] bg-[#cccccc] pl-2">
        <Tab active className="h-[28px] w-[79px] pl-[13px]">常规</Tab>
        <Tab className="h-[27px] w-[79px] pl-[13px]">文本</Tab>
        <Tab className="h-[27px] w-[79px] pl-[13px]">监控</Tab>
      </div>
      <div className="flex min-h-0 flex-1 pt-1">
        <div className="flex w-[248px] shrink-0 pr-px pl-px"><NavRows items={["常规", "属性"]} count={22} selected="常规" indent="pl-5" /></div>
        <Splitter className="w-[10px] border-b-0" handles="h-[337px] shrink-0" />
        <div className="flex min-w-0 flex-1 flex-col pt-3 pl-[15px]">
          <div className="flex h-6 shrink-0 items-end gap-[15px] pl-[3px]">
            <h3 className="text-lg leading-6 font-bold">常规</h3>
            <span className="mb-1 flex-1 border-b border-black" />
          </div>
          <div className="mt-2 flex shrink-0 flex-col gap-2 bg-[#cccccc] pt-[30px] pb-[15px] pl-[120px]">
            {fields.map(([name, value, bg]) => (
              <input key={name} aria-label={name} defaultValue={value} className={`h-[22px] w-full border-y-2 border-[#a4a4a4] ${bg}`} />
            ))}
          </div>
        </div>
      </div>
    </section>
  );
}

/* ---------- properties dialog ---------- */
function Dialog() {
  const options = [
    ["仅存储在装载内存中", false],
    ["在设备中写保护数据块", false],
    ["优化的块访问", false],
    ["数据块从 OPC UA 可访问", true],
    ["数据块可通过 Web 服务器访问", true],
  ];
  const nav = ["常规", "信息", "时间戳", "编译", "保护", "属性", "下载但不重新初..."];
  return (
    <div role="dialog" aria-label="数据块_1 [DB1]" className="absolute top-[478px] left-[787px] flex h-[562px] w-[987px] flex-col border border-white bg-[#cccccc]">
      <div className="flex h-[27px] shrink-0 items-center border-t border-[#333] bg-[linear-gradient(#888,#555_9px,#1e1e1e_9px)] pl-[6px] text-lg leading-6 font-bold text-white">
        <h2 className="flex-1 pb-[2px]">数据块<span className="font-semibold">_1 [DB1]</span></h2>
        <button type="button" aria-label="关闭" className="grid h-full w-[26px] place-items-center border-l border-[#aaa]">
          <svg viewBox="0 0 14 14" className="size-[14px]" aria-hidden="true"><path d="M1 1l12 12M13 1L1 13" stroke="#fff" strokeWidth="2.600" /></svg>
        </button>
      </div>
      <div className="flex min-h-0 flex-1 flex-col border-r-2 border-l-2 border-[#5a5a5a] border-r-[#1e1e1e]">
        <div className="flex min-h-0 flex-1 flex-col pt-[19px] pr-[17px] pb-4 pl-4">
          <div className="flex shrink-0 items-end gap-[2px] pl-[7px]">
            <Tab active className="h-7 w-[79px] pl-[13px]">常规</Tab>
            <Tab className="h-[27px] w-20 pl-[13px]">文本</Tab>
          </div>
          <div className="h-1 shrink-0 border-y border-[#8d8d8d] bg-[#d6d6d6]" />
          <div className="flex min-h-0 flex-1 bg-[#e9e9e9]">
            <div className="flex w-[155px] shrink-0 flex-col">
              <NavRows items={nav} count={16} selected="属性" indent="pl-[21px]" />
              <div className="flex h-[23px] shrink-0 bg-[#c1c1c1] pb-px">
                <button type="button" aria-label="向左滚动" className={`w-6 ${scrollBtn}`}><Chevron dir="left" /></button>
                <div className="ml-[2px] grid w-[91px] place-items-center border border-[#909090] bg-gradient-to-b from-[#ececec] to-[#d8d8d8]"><HGrip /></div>
                <span className="flex-1" />
                <button type="button" aria-label="向右滚动" className={`mr-px w-[22px] ${scrollBtn}`}><Chevron dir="right" /></button>
              </div>
            </div>
            <Splitter className="w-[10px] border-y-0" handles="h-[164px] shrink-0" />
            <div className="flex min-w-0 flex-1 flex-col pt-3 pr-[29px] pl-[15px]">
              <div className="flex h-6 items-end gap-[13px] pl-1">
                <h3 className="text-lg leading-6 font-bold">属性</h3>
                <span className="mb-1 flex-1 border-b border-black" />
              </div>
              <div className="mt-2 flex h-[188px] flex-col bg-[#cccccc] pt-[25px] pl-[22px]">
                {options.map(([label, on], i) => (
                  <div key={label} className="flex h-[30px] items-center gap-[5px] text-[15px] whitespace-nowrap">
                    <Check id={`opt${i}`} checked={on} />
                    <label htmlFor={`opt${i}`}>{label}</label>
                  </div>
                ))}
              </div>
              <p className="mt-[50px] pl-[57px] text-3xl leading-[44px] text-[#ff1200]">关闭-优化的块访问</p>
            </div>
          </div>
        </div>
        <div className="flex h-[54px] shrink-0 justify-end gap-2 bg-[#b0b0b0] pt-[14px] pr-[14px] text-[15px]">
          <button type="button" className="h-[26px] w-[112px] border-2 border-[#4a9a4a] bg-gradient-to-b from-[#dff2dc] via-[#86cc80] to-[#bdeab4]">确定</button>
          <button type="button" className="h-[26px] w-[112px] border-2 border-[#999] bg-gradient-to-b from-[#f0f0f0] via-[#d0d0d0] to-[#e2e2e2]">取消</button>
        </div>
      </div>
      <div className="flex h-[10px] shrink-0 items-end justify-end bg-[linear-gradient(#777,#444_3px,#1e1e1e_3px)]">
        <svg viewBox="0 0 10 10" className="size-[10px]" aria-hidden="true">
          <path d="M0 10V5h5V0h5v10z" fill="#fff" />
          <path d="M2 10V7h5V2h3v8z" fill="#1e1e1e" />
        </svg>
      </div>
    </div>
  );
}

/* ---------- step annotations ---------- */
function Annotations() {
  const frame = "pointer-events-none absolute rounded-md border-[12px] border-[#ff1200]";
  const dot = "pointer-events-none absolute grid size-8 place-items-center rounded-full bg-[#ff1200] text-xl leading-none text-white";
  return (
    <>
      <div className={`${frame} top-[428px] left-[95px] h-[55px] w-[193px]`} />
      <div className={`${frame} top-[514px] left-[800px] h-11 w-[97px]`} />
      <div className={`${frame} top-[663px] left-[806px] h-[39px] w-[71px]`} />
      <div className={`${frame} top-[675px] left-[973px] h-[53px] w-[197px]`} />
      <span className={`${dot} top-[438px] left-[287px]`}>1</span>
      <span className={`${dot} top-[514px] left-[754px]`}>2</span>
      <span className={`${dot} top-[661px] left-[760px]`}>3</span>
      <span className={`${dot} top-[644px] left-[941px]`}>4</span>
    </>
  );
}

export default function App() {
  return (
    <div className="relative flex h-screen flex-col overflow-hidden bg-[#b0b0b0] font-['Noto_Sans','Noto_Sans_CJK_SC',sans-serif] text-black">
      <Gradients />
      <TopBars />
      <div className="flex min-h-0 flex-1">
        <div className="flex w-[30px] shrink-0 flex-col border-r border-l border-[#9a9a9a] border-r-[#1c2236] bg-[#b0b0b0]">
          <div className="h-[31px] shrink-0 border-b border-white" />
          <button type="button" className="flex h-[276px] shrink-0 items-center justify-center border-b border-white text-white">
            <span className="rotate-180 text-lg leading-6 font-bold whitespace-nowrap [writing-mode:vertical-rl]">PLC 编程</span>
          </button>
        </div>
        <ProjectTree />
        <div className="w-[3px] shrink-0 bg-[#1c2236]" />
        <main className="flex min-w-0 flex-1 flex-col">
          <Editor />
          <Inspector />
        </main>
      </div>
      <Dialog />
      <Annotations />
    </div>
  );
}
